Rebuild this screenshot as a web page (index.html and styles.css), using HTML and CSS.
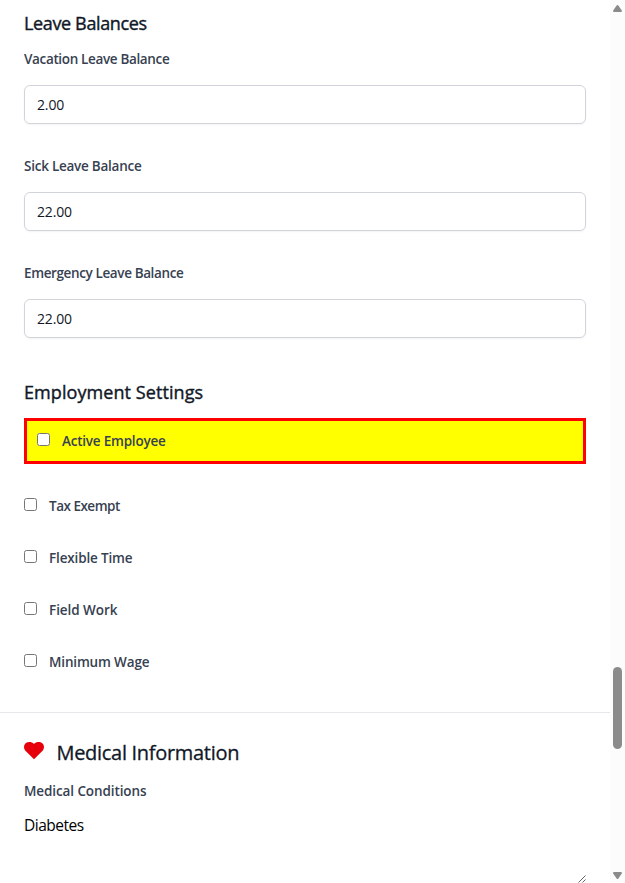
FILE: index.html
```html
<!DOCTYPE html>
<html lang="en">
<head>
<meta charset="utf-8">
<title>Employee</title>
<link rel="stylesheet" href="styles.css">
</head>
<body>
<div class="window">
  <main class="content">
    <section class="section">
      <h3 class="subtitle"><span class="t-leave">Leave Balances</span></h3>
      <div class="field"><label class="label" for="vacation"><span class="t-vacation">Vacation Leave Balance</span></label><input class="input" id="vacation" value="2.00"></div>
      <div class="field"><label class="label" for="sick"><span class="t-sick">Sick Leave Balance</span></label><input class="input" id="sick" value="22.00"></div>
      <div class="field last"><label class="label" for="emergency"><span class="t-emergency">Emergency Leave Balance</span></label><input class="input" id="emergency" value="22.00"></div>
      <h3 class="subtitle"><span class="t-settings">Employment Settings</span></h3>
      <label class="check active"><input type="checkbox"><span class="t-active">Active Employee</span></label>
      <div class="checks">
        <label class="check"><input type="checkbox"><span class="t-tax">Tax Exempt</span></label>
        <label class="check"><input type="checkbox"><span class="t-flex">Flexible Time</span></label>
        <label class="check"><input type="checkbox"><span class="t-field">Field Work</span></label>
        <label class="check"><input type="checkbox"><span class="t-wage">Minimum Wage</span></label>
      </div>
    </section>
    <section class="section medical">
      <h2 class="title">
        <svg class="heart" viewBox="0 0 20 18"><path d="M10 17.2 1.7 9.1C-.6 6.7-.5 3.1 1.7 1.3 4-.6 7.8-.2 10 1.9 12.2-.2 16-.6 18.3 1.3c2.2 1.8 2.3 5.4 0 7.8z"/></svg>
        <span class="t-medical">Medical Information</span>
      </h2>
      <label class="label" for="conditions"><span class="t-conditions">Medical Conditions</span></label>
      <div class="notes" id="conditions"><span class="t-diabetes">Diabetes</span>
        <svg class="grip" viewBox="0 0 8 8"><path d="M.5 7.5l7-7M4.5 7.5l3-3"/></svg>
      </div>
    </section>
  </main>
  <aside class="scrollbar">
    <svg class="arrow" viewBox="0 0 9 7"><path d="M3.6.6Q4.5-.5 5.4.6L8.8 5.6Q9.2 7 8 7H1Q-.2 7 .2 5.6z"/></svg>
    <div class="thumb"></div>
    <svg class="arrow down" viewBox="0 0 9 7"><path d="M3.6.6Q4.5-.5 5.4.6L8.8 5.6Q9.2 7 8 7H1Q-.2 7 .2 5.6z"/></svg>
  </aside>
</div>
</body>
</html>
```
FILE: styles.css
```css
* { box-sizing: border-box; }
body { margin: 0; background: #fff; color: #111827; font-family: "Open Sans", "Noto Sans", sans-serif; overflow: hidden; }
.window { display: flex; height: 883px; }
.content { width: 610px; height: 883px; overflow: hidden; }
.section { padding: 9px 24px 0; height: 712px; }
.subtitle { margin: 0 0 12px; font-size: 18px; line-height: 28px; font-weight: 400; white-space: nowrap; -webkit-text-stroke: .4px #111827; }
.field { height: 107px; }
.field.last { height: 115px; }
.label { display: block; font-size: 13.5px; line-height: 20px; font-weight: 600; color: #374151; white-space: nowrap; }
.input { display: block; width: 100%; height: 39px; margin: 16px 0 0; padding: 0 12px; border: 1px solid #d1d5db; border-radius: 6px; box-shadow: 0 1px 2px rgba(0,0,0,.05); color: #111827; background: #fff; font: 14px "Open Sans", sans-serif; letter-spacing: -.15px; }
.check { display: flex; align-items: flex-start; height: 52px; font-size: 13.5px; line-height: 20px; font-weight: 600; color: #374151; white-space: nowrap; }
.check input { width: 13px; height: 13px; margin: 2px 12px 0 0; }
.active { height: 46px; border: 3px solid #f00; background: #ff0; padding: 10px; }
.checks { padding-top: 32px; }
.medical { height: 171px; padding-top: 25px; border-top: 1px solid #e5e7eb; }
.title { display: flex; align-items: flex-start; margin: 0 0 13px; font-size: 20px; line-height: 30px; height: 30px; font-weight: 400; white-space: nowrap; -webkit-text-stroke: .3px #111827; }
.heart { width: 20px; height: 18px; margin: 4px 12.5px 0 0; fill: #e7000b; }
.notes { position: relative; height: 82px; padding-top: 12px; font-size: 15.5px; line-height: 24px; color: #000; font-weight: 400; }
.grip { position: absolute; right: 0; bottom: 0; width: 8px; height: 8px; fill: none; stroke: #666; stroke-width: 1; }
.t-leave { letter-spacing: -.36px; }
.t-vacation { letter-spacing: -.35px; }
.t-sick { letter-spacing: -.25px; }
.t-emergency { letter-spacing: -.38px; }
.t-settings { letter-spacing: .08px; }
.t-active { letter-spacing: -.22px; }
.t-tax { letter-spacing: -.5px; }
.t-flex { letter-spacing: -.16px; }
.t-field { letter-spacing: -.05px; }
.t-wage { letter-spacing: -.16px; }
.t-medical { letter-spacing: -.3px; }
.t-conditions { letter-spacing: -.1px; }
.t-diabetes { letter-spacing: -.5px; }
.scrollbar { width: 15px; height: 883px; background: #fcfcfc; padding: 5px 3px 4px; display: flex; flex-direction: column; align-items: flex-start; }
.arrow { width: 9px; height: 7px; fill: #8b8b8b; flex: none; }
.thumb { width: 9px; height: 82px; margin-top: 655px; border-radius: 5px; background: #8b8b8b; flex: none; }
.down { margin-top: auto; transform: rotate(180deg); }
```
